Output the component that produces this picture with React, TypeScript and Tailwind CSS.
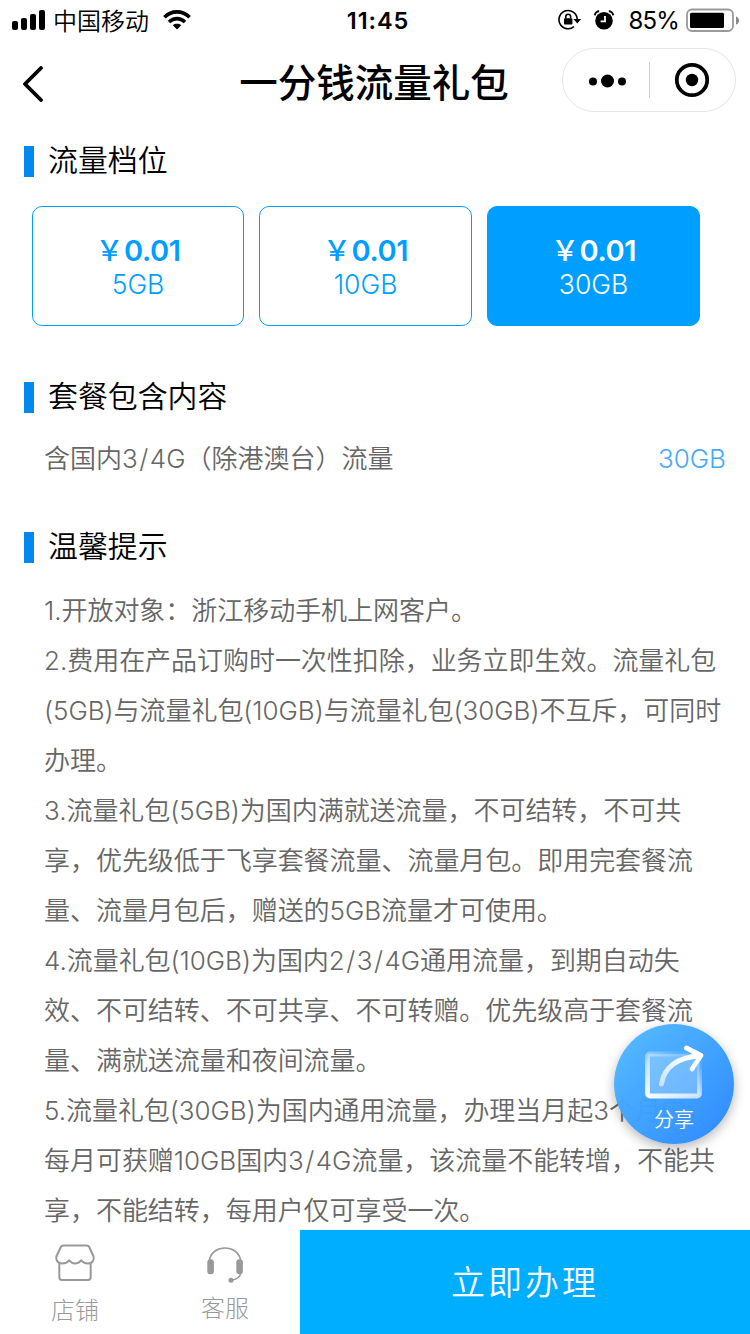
import clsx from 'clsx'

const plans = [
  { price: '0.01', size: '5GB' },
  { price: '0.01', size: '10GB' },
  { price: '0.01', size: '30GB' },
]

const tips = [
  '1.开放对象：浙江移动手机上网客户。',
  '2.费用在产品订购时一次性扣除，业务立即生效。流量礼包',
  '(5GB)与流量礼包(10GB)与流量礼包(30GB)不互斥，可同时',
  '办理。',
  '3.流量礼包(5GB)为国内满就送流量，不可结转，不可共',
  '享，优先级低于飞享套餐流量、流量月包。即用完套餐流',
  '量、流量月包后，赠送的5GB流量才可使用。',
  '4.流量礼包(10GB)为国内2/3/4G通用流量，到期自动失',
  '效、不可结转、不可共享、不可转赠。优先级高于套餐流',
  '量、满就送流量和夜间流量。',
  '5.流量礼包(30GB)为国内通用流量，办理当月起3个月内，',
  '每月可获赠10GB国内3/4G流量，该流量不能转增，不能共',
  '享，不能结转，每用户仅可享受一次。',
]

// slashes get a little extra room on both sides
function Spaced({ text }: { text: string }) {
  return (
    <>
      {text.split('/').map((part, i) => (
        <span key={i}>
          {i > 0 && <span className="mx-[1.5px]">/</span>}
          {part}
        </span>
      ))}
    </>
  )
}

function StatusBar() {
  return (
    <div className="flex h-10 shrink-0 items-center justify-between pl-3 pr-[10px]">
      <div className="flex w-[320px] items-center">
        <svg width="34" height="22" viewBox="0 0 34 22">
          <rect x="0" y="12" width="6" height="9" rx="2" />
          <rect x="9" y="9" width="6" height="12" rx="2" />
          <rect x="18" y="5" width="6" height="16" rx="2" />
          <rect x="27" y="1" width="6" height="20" rx="2" />
        </svg>
        <span className="ml-[7px] pt-[3px] text-[24px] font-[350] leading-[37px]">中国移动</span>
        <svg className="ml-[14px]" width="30" height="22" viewBox="0 0 30 22" fill="none" stroke="#000" strokeWidth="3.6">
          <path d="M1.4 8.2C8.8 1.1 19.2 1.1 26.6 8.2" />
          <path d="M6 13C10.8 8.5 17.2 8.5 22 13" />
          <path d="M14 20.4L9.8 16.2C12.3 14.3 15.7 14.3 18.2 16.2Z" fill="#000" stroke="none" />
        </svg>
      </div>
      <span className="relative left-[2px] pt-[2px] text-[23.5px] font-semibold tracking-[0.9px]">11:45</span>
      <div className="flex w-[320px] items-center justify-end">
        <svg width="24" height="22" viewBox="0 0 24 22" fill="none" stroke="#000" strokeWidth="1.6">
          <path d="M16 17.6A9.1 9.1 0 1 1 19.2 10.5" />
          <path d="M15.4 10H23.2L19.3 14.6Z" fill="#000" stroke="none" />
          <rect x="6" y="9.2" width="8.4" height="6.4" rx="0.8" fill="#000" stroke="none" />
          <path d="M7.8 9.6V7.6a2.4 2.4 0 0 1 4.8 0v2" />
        </svg>
        <svg className="ml-3" width="20" height="20" viewBox="0 0 20 20">
          <circle cx="10" cy="10.7" r="8.8" />
          <path d="M0.8 5.4C1 3 3 1.3 5.2 1.3M19.2 5.4C19 3 17 1.3 14.8 1.3" fill="none" stroke="#000" strokeWidth="2" />
          <path d="M11 6V11.4H6.6" fill="none" stroke="#fff" strokeWidth="1.8" />
        </svg>
        <span className="ml-[14px] pt-[2px] text-[24px] font-normal tracking-[-0.8px]">85%</span>
        <svg className="ml-[7px]" width="54" height="24" viewBox="0 0 54 24">
          <rect x="1" y="1.5" width="46" height="21.5" rx="5" fill="none" stroke="#999" strokeWidth="1.8" />
          <rect x="4" y="4.7" width="34" height="15.3" rx="1.5" />
          <path d="M50 8.5C54 9.5 54 15.5 50 16.5Z" fill="#888" />
        </svg>
      </div>
    </div>
  )
}

function NavBar() {
  return (
    <div className="grid h-20 shrink-0 grid-cols-[1fr_auto_1fr] items-center pl-[22px] pr-[14px]">
      <div className="pt-[7px]">
        <svg width="22" height="36" viewBox="0 0 22 36" fill="none" stroke="#000" strokeWidth="3.8" strokeLinecap="round" strokeLinejoin="round">
          <path d="M19 2L3 18L19 34" />
        </svg>
      </div>
      <h1 className="-ml-[10px] whitespace-nowrap pt-[5px] text-[38.5px] font-medium leading-[56px]">一分钱流量礼包</h1>
      <div className="flex h-16 w-[174px] items-center justify-self-end rounded-full border border-[#e5e5e5]">
        <svg className="ml-[26px] mr-[23px] mt-px" width="37" height="14" viewBox="0 0 37 14">
          <circle cx="4" cy="7.5" r="4" />
          <circle cx="18.5" cy="7" r="6.5" />
          <circle cx="33" cy="7.5" r="4" />
        </svg>
        <div className="h-9 w-px bg-[#d0d0d0]" />
        <svg className="ml-[24px]" width="36" height="36" viewBox="0 0 36 36">
          <circle cx="18" cy="18" r="15.2" fill="none" stroke="#000" strokeWidth="3.8" />
          <circle cx="18" cy="18" r="6.2" />
        </svg>
      </div>
    </div>
  )
}

function SectionTitle({ text }: { text: string }) {
  return (
    <div className="flex h-[31px] items-center">
      <div className="h-[31px] w-[10px] bg-[#0389ed]" />
      <h2 className="-mt-[3px] ml-[14px] text-[29.9px] font-[350] leading-[31px]">{text}</h2>
    </div>
  )
}

function ShareButton() {
  return (
    <button className="absolute left-[614px] top-[1024px] flex h-[120px] w-[120px] flex-col items-center rounded-full bg-linear-to-br from-[#54bbfff8] to-[#2884fff8] text-white shadow-[0_4px_12px_rgba(0,0,0,0.28)]">
      <svg className="mt-[18px]" width="62" height="60" viewBox="0 0 62 60" fill="none">
        <defs>
          <linearGradient id="frame" x1="0" y1="1" x2="0.6" y2="0">
            <stop offset="0" stopColor="#fff" stopOpacity="0.95" />
            <stop offset="0.5" stopColor="#fff" stopOpacity="0.65" />
            <stop offset="1" stopColor="#fff" stopOpacity="0.1" />
          </linearGradient>
          <linearGradient id="arrow" x1="0" y1="1" x2="0.7" y2="0">
            <stop offset="0" stopColor="#fff" stopOpacity="0.6" />
            <stop offset="1" stopColor="#fff" />
          </linearGradient>
        </defs>
        <rect x="4.5" y="12" width="52" height="42" rx="2.5" fill="#fff" fillOpacity="0.25" stroke="url(#frame)" strokeWidth="4.8" />
        <path d="M18.5 42C21 25 35 15 57 14" stroke="url(#arrow)" strokeWidth="5" strokeLinecap="round" />
        <path d="M43.5 6L58 13.5L49 27" stroke="#fff" strokeWidth="4.8" strokeLinecap="round" strokeLinejoin="round" />
      </svg>
      <span className="mt-[3px] text-[20px] font-[350] leading-[30px]">分享</span>
    </button>
  )
}

function BottomBar() {
  return (
    <div className="flex h-[104px] shrink-0 bg-white text-[#999]">
      <div className="flex w-[150px] flex-col items-center pt-[13px]">
        <svg width="42" height="40" viewBox="0 0 42 40" fill="none" stroke="#999" strokeWidth="2" strokeLinejoin="round">
          <path d="M9.5 2.5H32.5Q34.5 2.5 35.2 4L39.6 13.5C40.5 17.5 38 20.5 34 20.5Q30 20.5 27.2 17.3Q24.5 20.5 21 20.5T15.3 17.3Q12.5 20.5 8 20.5C4 20.5 1.5 17.5 2.4 13.5L6.8 4Q7.5 2.5 9.5 2.5Z" />
          <path d="M5.3 20V34Q5.3 37 8 37H34Q36.7 37 36.7 34V20" />
        </svg>
        <span className="mt-[10px] text-[24px] font-light leading-[36px]">店铺</span>
      </div>
      <div className="flex w-[150px] flex-col items-center pt-[15px]">
        <svg width="38" height="38" viewBox="0 0 38 38" fill="none" stroke="#999" strokeWidth="1.6">
          <path d="M3.5 15C6 -1 32 -1 34.5 15M35 27Q34 34.5 25 35.3" />
          <rect x="1.3" y="14.3" width="6.6" height="15" rx="3" fill="#999" stroke="none" />
          <rect x="30.3" y="14.3" width="6.6" height="15" rx="3" fill="#999" stroke="none" />
          <circle cx="25" cy="35.3" r="2.5" fill="#999" stroke="none" />
        </svg>
        <span className="mt-[8px] text-[24px] font-light leading-[36px]">客服</span>
      </div>
      <button className="flex-1 bg-[#00aeff] text-[34px] font-[350] tracking-[3px] text-white">立即办理</button>
    </div>
  )
}

export default function App() {
  return (
    <div className="relative flex h-[1334px] w-[750px] flex-col overflow-hidden bg-white font-[Inter,'Noto_Sans_CJK_SC',sans-serif] text-black">
      <StatusBar />
      <NavBar />
      <main className="min-h-0 flex-1 overflow-hidden pl-6 pt-[26px]">
        <SectionTitle text="流量档位" />
        <div className="ml-2 mt-[29px] grid w-[668px] grid-cols-[212px_213px_213px] gap-[15px]">
          {plans.map((plan, i) => (
            <div
              key={plan.size}
              className={clsx(
                'flex h-[120px] flex-col items-center rounded-[10px] border border-[#009fff] pt-[28px]',
                i === 2 ? 'bg-[#009fff] text-white' : 'text-[#009fff]'
              )}
            >
              <p className="flex whitespace-nowrap text-[29px] font-semibold leading-[32px] tracking-[-0.4px]">
                <span className="mr-px text-[28px] font-medium">￥</span>
                {plan.price}
              </p>
              <p className="mt-px text-[26.5px] font-light leading-[32px]">{plan.size}</p>
            </div>
          ))}
        </div>

        <div className="mt-[56px]">
          <SectionTitle text="套餐包含内容" />
        </div>
        <div className="ml-5 mr-[24px] mt-[21px] flex justify-between text-[26px] font-[350] leading-[50px] text-[#666]">
          <span><Spaced text="含国内3/4G（除港澳台）流量" /></span>
          <span className="text-[#45aaf5]">30GB</span>
        </div>

        <div className="mt-[48px]">
          <SectionTitle text="温馨提示" />
        </div>
        <div className="ml-5 mt-[23px] whitespace-nowrap text-[26px] font-[350] leading-[50px] tracking-[-0.04px] text-[#666]">
          {tips.map((tip) => (
            <p key={tip}><Spaced text={tip} /></p>
          ))}
        </div>
      </main>
      <BottomBar />
      <ShareButton />
    </div>
  )
}
